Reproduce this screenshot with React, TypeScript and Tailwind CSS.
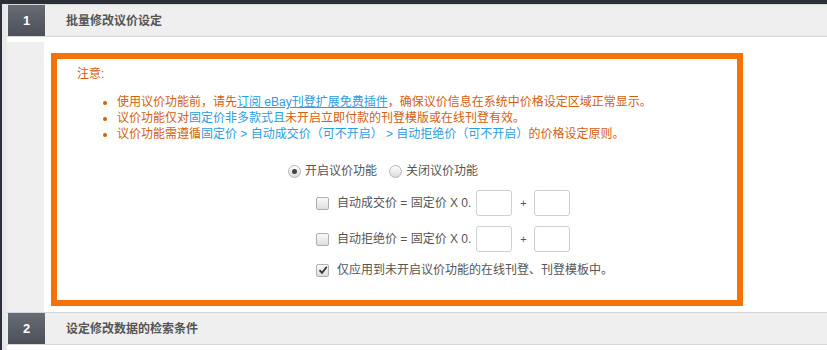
import React from 'react';

const Radio: React.FC<{ checked?: boolean }> = ({ checked }) => (
  <span className="w-[13px] h-[13px] rounded-full border border-[#b5b5b5] bg-gradient-to-b from-[#fdfdfd] to-[#dcdcdc] flex items-center justify-center shrink-0">
    {checked && <span className="w-[5px] h-[5px] rounded-full bg-[#444]" />}
  </span>
);

const Check: React.FC<{ checked?: boolean }> = ({ checked }) => (
  <span className="w-[13px] h-[13px] rounded-[2px] border border-[#b0b0b0] bg-gradient-to-b from-[#fafafa] to-[#dedede] flex items-center justify-center shrink-0">
    {checked && (
      <svg width="10" height="10" viewBox="0 0 10 10">
        <path d="M1.5 5.2 L4 7.8 L8.8 1.8" fill="none" stroke="#333" strokeWidth="1.8" />
      </svg>
    )}
  </span>
);

const Box = () => <span className="w-[36px] h-[26px] border border-[#cfcfcf] rounded-[3px] bg-white shrink-0" />;

const StepHeader: React.FC<{ n: string; title: string }> = ({ n, title }) => (
  <div className="h-[33px] border-t border-b border-[#d6d6d6] bg-[#efefef] flex">
    <div className="w-[37px] ml-[1px] bg-gradient-to-b from-[#686c74] to-[#4c5059] flex items-center justify-center text-white font-bold text-[13px]">
      {n}
    </div>
    <div className="pl-[21px] flex items-center text-[12px] font-bold text-[#555]">{title}</div>
  </div>
);

const PriceRow: React.FC<{ label: string }> = ({ label }) => (
  <div className="flex items-center h-[26px] text-[#555]">
    <Check />
    <span className="ml-[8px] mr-[5px]">{label} = 固定价 X 0.</span>
    <Box />
    <span className="w-[22px] text-center text-[11px]">+</span>
    <Box />
  </div>
);

export default function App() {
  const orange = 'text-[#d3600f]';
  const blue = 'text-[#2c9de0]';
  return (
    <div className="w-[827px] h-[350px] overflow-hidden bg-[#2b2f38] pt-[4px] pl-[2px] font-['Liberation_Sans','Noto_Sans_CJK_SC',sans-serif] text-[12px] leading-[16px]">
      <div className="h-full bg-white border-l-[5px] border-[#e8e8e8]">
        <StepHeader n="1" title="批量修改议价设定" />
        <div className="flex mt-[5px] h-[270px]">
          <div className="w-[37px] bg-[#efefef]" />
          <div className="flex-1 pl-[7px] pt-[11px]">
            <div className="w-[692px] h-[253px] border-[6px] border-[#f57207] pt-[7px] pl-[20px]">
              <div className={orange}>注意:</div>
              <ul className={`list-disc mt-[12px] pl-[40px] ${orange}`}>
                <li>
                  使用议价功能前，请先<span className={`${blue} underline`}>订阅 eBay刊登扩展免费插件</span>，确保议价信息在系统中价格设定区域正常显示。
                </li>
                <li>
                  议价功能仅对<span className={blue}>固定价非多款式且</span>未开启立即付款的刊登模版或在线刊登有效。
                </li>
                <li>
                  议价功能需遵循<span className={blue}>固定价 &gt; 自动成交价（可不开启） &gt; 自动拒绝价（可不开启）</span>的价格设定原则。
                </li>
              </ul>
              <div className="ml-[211px] mt-[21px] flex items-center text-[#555]">
                <Radio checked />
                <span className="ml-[4px] mr-[12px]">开启议价功能</span>
                <Radio />
                <span className="ml-[4px]">关闭议价功能</span>
              </div>
              <div className="ml-[239px] mt-[11px] flex flex-col gap-[10px]">
                <PriceRow label="自动成交价" />
                <PriceRow label="自动拒绝价" />
                <div className="flex items-center text-[#555]">
                  <Check checked />
                  <span className="ml-[8px]">仅应用到未开启议价功能的在线刊登、刊登模板中。</span>
                </div>
              </div>
            </div>
          </div>
        </div>
        <StepHeader n="2" title="设定修改数据的检索条件" />
      </div>
    </div>
  );
}
